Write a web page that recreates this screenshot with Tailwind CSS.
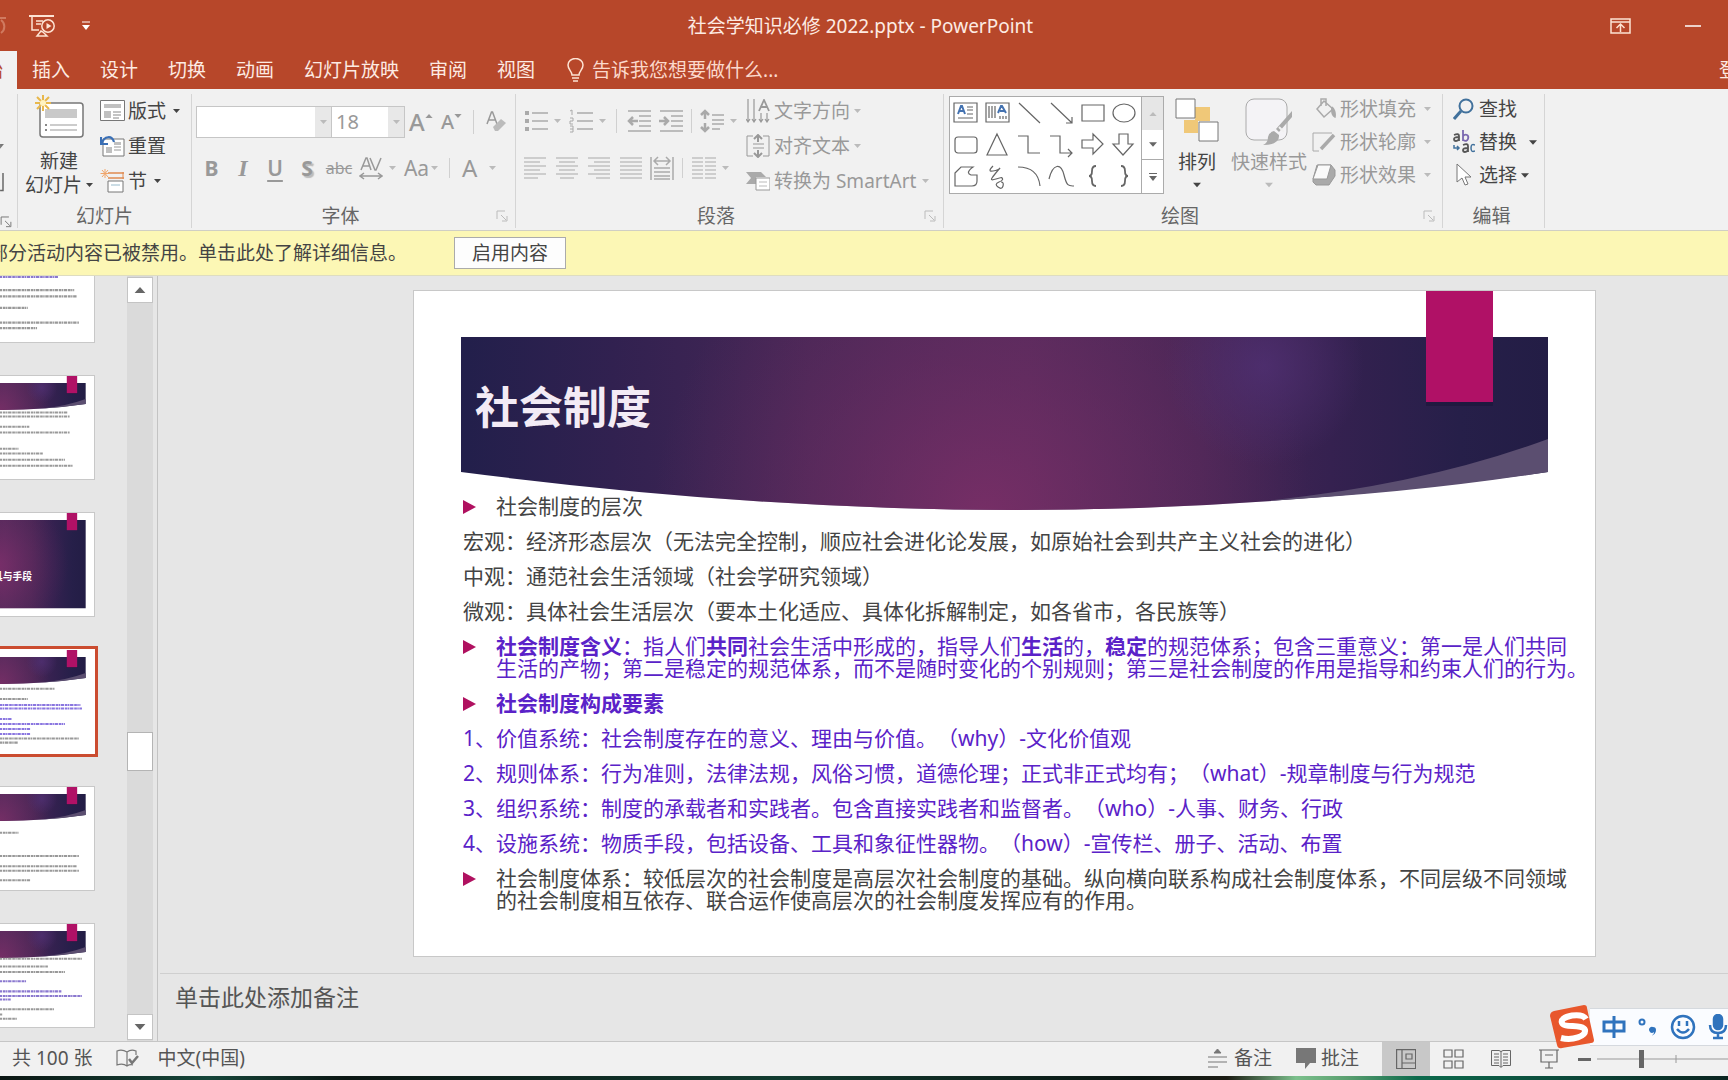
<!DOCTYPE html>
<html lang="zh-CN">
<head>
<meta charset="utf-8">
<title>社会学知识必修 2022.pptx - PowerPoint</title>
<script src="https://cdn.jsdelivr.net/npm/@tailwindcss/browser@4"></script>
</head>
<body class="relative flex h-screen flex-col overflow-hidden bg-[#e6e6e6] font-['Noto_Sans','Noto_Sans_CJK_SC',sans-serif] text-[19px] leading-6 text-[#444] [text-spacing-trim:space-all]">

<svg class="absolute h-0 w-0" aria-hidden="true">
  <defs>
    <linearGradient id="band" x1="0" x2="1" y1="0" y2="0">
      <stop offset="0" stop-color="#221f4b"/><stop offset=".14" stop-color="#312150"/><stop offset=".32" stop-color="#472756"/><stop offset=".52" stop-color="#522a5b"/><stop offset=".68" stop-color="#472655"/><stop offset=".8" stop-color="#352150"/><stop offset=".92" stop-color="#261f49"/><stop offset="1" stop-color="#231d45"/>
    </linearGradient>
    <radialGradient id="glow" gradientUnits="userSpaceOnUse" cx="570" cy="225" r="330"><stop offset="0" stop-color="#7d2f68" stop-opacity=".85"/><stop offset="1" stop-color="#6b2d62" stop-opacity="0"/></radialGradient>
    <radialGradient id="spot" gradientUnits="userSpaceOnUse" cx="850" cy="75" r="100"><stop offset="0" stop-color="#503073" stop-opacity=".8"/><stop offset="1" stop-color="#503073" stop-opacity="0"/></radialGradient>
    <radialGradient id="glowTall" gradientUnits="userSpaceOnUse" cx="540" cy="340" r="480"><stop offset="0" stop-color="#8a3070" stop-opacity=".75"/><stop offset="1" stop-color="#6b2d62" stop-opacity="0"/></radialGradient>
  </defs>
  <symbol id="banner" viewBox="0 0 1181 665">
    <path d="M47 46H1134V181Q860 219 600 219T47 181Z" fill="url(#band)"/>
    <path d="M47 46H1134V181Q860 219 600 219T47 181Z" fill="url(#glow)"/>
    <path d="M47 46H1134V181Q860 219 600 219T47 181Z" fill="url(#spot)"/>
    <path d="M1134 148Q1010 194 850 210Q1000 202 1134 181Z" fill="#5b4e70"/>
    <path d="M1012 111h67v4h-67z" fill="#171336" opacity=".5"/>
    <path d="M1012 0h67v111h-67z" fill="#b01166"/>
  </symbol>
  <symbol id="cover" viewBox="0 0 1181 665">
    <path d="M47 46H1134V615H47Z" fill="url(#band)"/><path d="M47 46H1134V615H47Z" fill="url(#glowTall)"/>
    <path d="M1012 0h67v111h-67z" fill="#b01166"/>
  </symbol>
  <symbol id="down" viewBox="0 0 9 5"><path d="M0 0h9L4.500 5z" fill="currentColor"/></symbol>
  <symbol id="launch" viewBox="0 0 12 12"><path d="M1 9V1h8M5 5l5 5M11 6v5H6" fill="none" stroke="currentColor"/></symbol>
</svg>

<header class="shrink-0 bg-[#b7472a] text-[#fdebe3]">
  <div class="flex h-[51px] items-center">
    <div class="flex flex-1 items-center">
      <svg class="h-6 w-7" viewBox="0 0 28 24" fill="none" stroke="#d07a60" stroke-width="2"><path d="M0 4h6M1 6a8 8 0 0 1 0 13"/></svg>
      <button class="ml-px flex" aria-label="从头开始"><svg class="h-6 w-7" viewBox="0 0 28 24" fill="none" stroke="#fde3d3" stroke-width="1.500"><path d="M0 2h25" stroke-width="2"/><path d="M3 3v13h7M7 7h7M7 10h5M12 17l-4 5h10l-4-4z"/><circle cx="19" cy="12" r="6.200"/><path d="M17.500 9v6l5-3z" fill="#fde3d3" stroke="none"/></svg></button>
      <button class="ml-6 flex" aria-label="自定义快速访问工具栏"><svg class="h-2.5 w-2.5" viewBox="0 0 10 10"><path d="M1 1h8" stroke="#fff"/><path d="M1 4h8L5 9z" fill="#fff"/></svg></button>
    </div>
    <h1 class="pl-5 font-normal">社会学知识必修 2022.pptx - PowerPoint</h1>
    <div class="flex flex-1 items-center justify-end gap-[54px] pr-[27px]">
      <button class="flex" aria-label="功能区显示选项"><svg class="h-4 w-[21px]" viewBox="0 0 21 16" fill="none" stroke="#fde3d3" stroke-width="1.500"><path d="M1 1h19v14H1zM1 4h19M10.500 14V6M6.500 10l4-4 4 4"/></svg></button>
      <button class="flex" aria-label="最小化"><svg class="h-1 w-4" viewBox="0 0 16 4"><path d="M0 2h16" stroke="#fff" stroke-width="1.500"/></svg></button>
    </div>
  </div>
  <nav class="flex h-[38px] items-center overflow-hidden whitespace-nowrap">
    <button class="flex h-full w-[17px] shrink-0 items-center justify-end overflow-hidden bg-[#f1f1f1] text-[#b7472a]" aria-label="开始"><span class="mr-3.5">始</span></button>
    <div class="ml-[15px] flex shrink-0 gap-[30px]">
      <button>插入</button><button>设计</button><button>切换</button><button>动画</button><button>幻灯片放映</button><button>审阅</button><button>视图</button>
    </div>
    <button class="ml-8 flex shrink-0 items-center gap-2 text-[#fbd9cc]"><svg class="h-6 w-[17px]" viewBox="0 0 17 24" fill="none" stroke="#fde3d3" stroke-width="1.500"><path d="M5 17c0-4-4-5-4-10a7.500 6.500 0 0 1 15 0c0 5-4 6-4 10zM5 20h7M6 23h5"/></svg>告诉我您想要做什么...</button>
    <div class="flex flex-1 justify-end overflow-hidden"><a href="#" class="w-[9px] shrink-0 overflow-hidden">登录</a></div>
  </nav>
</header>

<section class="flex h-[142px] shrink-0 overflow-hidden whitespace-nowrap border-b border-[#d0cfc4] bg-[#f1f1f1] pt-[5px] pb-0.5" aria-label="功能区">
  <!-- 剪贴板 -->
  <div class="flex w-[18px] shrink-0 flex-col items-start border-r border-[#d5d5d5] pt-[50px]">
    <svg class="h-[5px] w-1" viewBox="0 0 4 5"><path d="M0 0h4L0 5z" fill="#777"/></svg>
    <svg class="mt-6 h-5 w-1.5" viewBox="0 0 6 20"><path d="M3 0v18H0" fill="none" stroke="#666" stroke-width="1.500"/></svg>
    <svg class="mt-6 h-3 w-3 text-[#777]"><use href="#launch"/></svg>
  </div>

  <!-- 幻灯片 -->
  <div class="flex w-[174px] shrink-0 flex-col border-r border-[#d5d5d5]">
    <div class="flex flex-1 gap-1.5 pl-1.5">
      <button class="flex w-[70px] flex-col items-center">
        <svg class="h-[45px] w-[52px]" viewBox="0 0 52 45"><rect x="7" y="9" width="43" height="34" rx="3" fill="#fff" stroke="#777" stroke-width="1.500"/><path d="M12 15h32v9H12z" fill="#c9c9c9"/><path d="M17 31h27M17 36h27" stroke="#999"/><path d="M12 31h2M12 36h2" stroke="#888" stroke-width="2"/><path d="M10 1v16M2 9h16M4 3l12 12M16 3L4 15" stroke="#e8b84c" stroke-width="2"/><circle cx="10" cy="9" r="3" fill="#fff3c0"/></svg>
        <span class="mt-2.5">新建</span>
        <span class="flex items-center gap-1">幻灯片<svg class="h-1 w-[7px]"><use href="#down"/></svg></span>
      </button>
      <div class="flex flex-col gap-[11px] pt-[5px]">
        <button class="flex items-center gap-[3px]"><svg class="h-[22px] w-[25px]" viewBox="0 0 25 22"><path d="M.5.5h24v20H.5z" fill="#fff" stroke="#777"/><path d="M4 4h17v4H4zM4 11h7v7H4z" fill="#c0c0c0"/><path d="M13 12h8M13 15h8M13 18h6" stroke="#888"/></svg>版式<svg class="ml-1 h-1 w-[7px]"><use href="#down"/></svg></button>
        <button class="flex items-center gap-[3px]"><svg class="h-[22px] w-[25px]" viewBox="0 0 25 22"><path d="M3 4h21v17H3z" fill="#fff" stroke="#777"/><path d="M6 12h6v6H6zM14 7h7v3h-7z" fill="#c0c0c0"/><path d="M14 12h7M14 15h7" stroke="#999"/><path d="M14 7C12 0 4 1 2 8M1 2v7h7" fill="none" stroke="#3a6fb5" stroke-width="2.200"/></svg>重置</button>
        <button class="flex items-center gap-[3px]"><svg class="h-6 w-[25px]" viewBox="0 0 25 24"><path d="M8 4h16M8 9h16" stroke="#e08a50" stroke-width="1.500"/><path d="M23 3v7" stroke="#e08a50"/><path d="M8 12h15v11H8z" fill="#fff" stroke="#777"/><path d="M11 16h9" stroke="#9bc"/><path d="M5 0v9M.5 4.500h9M2 1l6 7M8 1L2 8" stroke="#f0a56a"/></svg>节<svg class="ml-1 h-1 w-[7px]"><use href="#down"/></svg></button>
      </div>
    </div>
    <div class="text-center text-[#666]">幻灯片</div>
  </div>

  <!-- 字体 -->
  <div class="flex w-[324px] shrink-0 flex-col border-r border-[#d5d5d5] text-[#999]">
    <div class="flex-1 pt-3 pl-1">
      <div class="flex h-8 items-center">
        <div class="flex h-8 w-[136px] border border-[#c6c6c6] bg-white"><input class="w-full min-w-0 px-2 outline-none" aria-label="字体"><span class="flex w-4 shrink-0 items-center justify-center bg-[#e8e8e8]"><svg class="h-1 w-[7px] text-[#bbb]"><use href="#down"/></svg></span></div>
        <div class="flex h-8 w-[73px] border border-l-0 border-[#c6c6c6] bg-white"><input class="w-full min-w-0 pl-1 text-[20px] outline-none" value="18" aria-label="字号"><span class="flex w-4 shrink-0 items-center justify-center bg-[#e8e8e8]"><svg class="h-1 w-[7px] text-[#bbb]"><use href="#down"/></svg></span></div>
        <button class="ml-1 flex w-8 items-end text-[24px] font-medium" aria-label="增大字号">A<svg class="mb-4 h-1 w-2 rotate-180"><use href="#down"/></svg></button>
        <button class="flex w-8 items-end text-[20px] font-medium" aria-label="减小字号">A<svg class="mb-4 h-1 w-2"><use href="#down"/></svg></button>
        <span class="h-6 w-px bg-[#d0d0d0]"></span>
        <button class="ml-3 flex" aria-label="清除格式"><svg class="h-[22px] w-5" viewBox="0 0 20 22"><path d="M1 13L5.500 1h1L11 13M3 9h6" fill="none" stroke="#999" stroke-width="1.500"/><path d="M7 16l8-8 5 4-8 8H9z" fill="#bbb"/></svg></button>
      </div>
      <div class="mt-4 flex h-7 items-center text-center">
        <button class="w-[31px] text-[21px] font-bold">B</button>
        <button class="w-8 font-['Liberation_Serif',serif] text-[24px] font-bold italic">I</button>
        <button class="w-8 text-[21px] font-semibold underline underline-offset-4">U</button>
        <button class="w-8 text-[21px] font-bold text-shadow-[2px_2px_1px_#bbb]">S</button>
        <button class="w-8 text-[16px] line-through">abc</button>
        <button class="flex w-11 items-center justify-center gap-1.5" aria-label="字符间距"><svg class="h-6 w-6" viewBox="0 0 24 24" fill="none" stroke="#999" stroke-width="1.500"><path d="M2 14L7 2h1l4 12M4 10h7M11 2l5 12h1l5-12M1 20h22M5 17l-4 3 4 3M19 17l4 3-4 3"/></svg><svg class="h-1 w-[7px] text-[#bbb]"><use href="#down"/></svg></button>
        <button class="flex w-11 items-center justify-center gap-0.5 text-[21px]">Aa<svg class="h-1 w-[7px] text-[#bbb]"><use href="#down"/></svg></button>
        <span class="ml-1.5 h-5 w-px bg-[#d0d0d0]"></span>
        <button class="ml-3 flex items-center gap-3 text-[24px]" aria-label="字体颜色">A<svg class="h-1 w-[7px] text-[#bbb]"><use href="#down"/></svg></button>
      </div>
    </div>
    <div class="flex items-center text-[#666]"><span class="-mr-[18px] flex-1 pr-10 pl-[15px] text-center">字体</span><button class="mr-[7px] flex text-[#bbb]" aria-label="字体设置"><svg class="h-3 w-3"><use href="#launch"/></svg></button></div>
  </div>

  <!-- 段落 -->
  <div class="flex w-[428px] shrink-0 flex-col border-r border-[#d5d5d5] text-[#999]">
    <div class="flex flex-1 pl-2">
      <div class="w-[222px] pt-[15px]">
        <div class="flex h-6 items-center">
          <button class="flex items-center gap-1.5" aria-label="项目符号"><svg class="h-6 w-6" viewBox="0 0 24 24" stroke="#aaa"><path d="M8 4h16M8 12h16M8 20h16" stroke-width="1.500"/><path d="M1 4h4M1 12h4M1 20h4" stroke-width="4"/></svg><svg class="h-1 w-[7px] text-[#bbb]"><use href="#down"/></svg></button>
          <button class="ml-2 flex items-center gap-1.5" aria-label="编号"><svg class="h-6 w-6" viewBox="0 0 24 24" fill="none" stroke="#aaa"><path d="M8 4h16M8 12h16M8 20h16" stroke-width="1.500"/><path d="M1 2l2-1v5M1 9h3v3H1v3h3M1 17h3v6H1M1 20h3"/></svg><svg class="h-1 w-[7px] text-[#bbb]"><use href="#down"/></svg></button>
          <span class="ml-2.5 h-6 w-px bg-[#d0d0d0]"></span>
          <button class="ml-2.5 flex" aria-label="降低列表级别"><svg class="h-6 w-6" viewBox="0 0 24 24" fill="none" stroke="#aaa" stroke-width="1.500"><path d="M1 2h23M12 7h12M12 12h12M12 17h12M1 22h23"/><path d="M11 12H2M6 8l-4 4 4 4" stroke-width="2.500"/></svg></button>
          <button class="ml-2 flex" aria-label="提高列表级别"><svg class="h-6 w-6" viewBox="0 0 24 24" fill="none" stroke="#aaa" stroke-width="1.500"><path d="M1 2h23M12 7h12M12 12h12M12 17h12M1 22h23"/><path d="M0 12h9M5 8l4 4-4 4" stroke-width="2.500"/></svg></button>
          <span class="ml-2 h-6 w-px bg-[#d0d0d0]"></span>
          <button class="ml-2 flex items-center gap-1.5" aria-label="行距"><svg class="h-6 w-6" viewBox="0 0 24 24" fill="none" stroke="#aaa" stroke-width="1.500"><path d="M12 6h12M12 11h12M12 15h12M12 20h8"/><path d="M5 2v8M1 6l4-4 4 4M5 14v8M1 18l4 4 4-4" stroke-width="2.500"/></svg><svg class="h-1 w-[7px] text-[#bbb]"><use href="#down"/></svg></button>
        </div>
        <div class="mt-[23px] flex h-6 items-center gap-2.5">
          <button class="flex" aria-label="左对齐"><svg class="h-[22px] w-[22px]" viewBox="0 0 22 22" stroke="#aaa"><path d="M0 1h22M0 5h16M0 9h22M0 13h16M0 17h22M0 21h14" stroke-width="1.200"/></svg></button>
          <button class="flex" aria-label="居中"><svg class="h-[22px] w-[22px]" viewBox="0 0 22 22" stroke="#aaa"><path d="M0 1h22M3 5h16M0 9h22M3 13h16M0 17h22M4 21h14" stroke-width="1.200"/></svg></button>
          <button class="flex" aria-label="右对齐"><svg class="h-[22px] w-[22px]" viewBox="0 0 22 22" stroke="#aaa"><path d="M0 1h22M6 5h16M0 9h22M6 13h16M0 17h22M8 21h14" stroke-width="1.200"/></svg></button>
          <button class="flex" aria-label="两端对齐"><svg class="h-[22px] w-[22px]" viewBox="0 0 22 22" stroke="#aaa"><path d="M0 1h22M0 5h22M0 9h22M0 13h22M0 17h22M0 21h22" stroke-width="1.200"/></svg></button>
          <button class="-ml-0.5 flex" aria-label="分散对齐"><svg class="h-6 w-6" viewBox="0 0 24 24" fill="none" stroke="#aaa" stroke-width="1.500"><path d="M1 1v23M23 1v23M4 12h16M4 16h16M4 20h16M4 23h16M4 5h16M8 1L4 5l4 4M16 1l4 4-4 4"/></svg></button>
          <span class="-ml-0.5 h-5 w-px bg-[#d0d0d0]"></span>
          <button class="-ml-px flex items-center gap-1.5" aria-label="分栏"><svg class="h-[22px] w-6" viewBox="0 0 24 22" stroke="#aaa"><path d="M0 1h11M0 5h11M0 9h11M0 13h11M0 17h11M0 21h11M13 1h11M13 5h11M13 9h11M13 13h11M13 17h11M13 21h11" stroke-width="1.200"/></svg><svg class="h-1 w-[7px] text-[#bbb]"><use href="#down"/></svg></button>
        </div>
      </div>
      <div class="flex flex-col gap-[11px] pt-[5px]">
        <button class="flex items-center gap-1"><svg class="h-6 w-6" viewBox="0 0 24 24" fill="none" stroke="#999" stroke-width="1.200"><path d="M2 0v23M8 0v23M0 20l2 3 2-3M6 20l2 3 2-3M15 14v9M21 14v9M13 20l2 3 2-3M19 20l2 3 2-3"/><path d="M13 12l5-11 5 11M15 8h6" stroke-width="1.800"/></svg>文字方向<svg class="h-1 w-[7px] text-[#bbb]"><use href="#down"/></svg></button>
        <button class="flex items-center gap-1"><svg class="h-6 w-6" viewBox="0 0 24 24" fill="none" stroke="#999"><path d="M7 2H1v20h6M17 2h6v20h-6M7 10h11M7 14h11"/><path d="M12 1v7M8 5l4-4 4 4M12 16v7M8 19l4 4 4-4" stroke-width="2"/></svg>对齐文本<svg class="h-1 w-[7px] text-[#bbb]"><use href="#down"/></svg></button>
        <button class="flex items-center gap-1"><svg class="h-6 w-6" viewBox="0 0 24 24"><path d="M0 3h15l5 5H10v7H0l5-6z" fill="#aaa"/><path d="M10 9h14v12H10z" fill="#fff" stroke="#999"/><path d="M13 13h8M13 17h8" stroke="#bbb"/></svg>转换为 SmartArt<svg class="ml-0.5 h-1 w-[7px] text-[#bbb]"><use href="#down"/></svg></button>
      </div>
    </div>
    <div class="flex items-center text-[#666]"><span class="-mr-[18px] flex-1 pr-[51px] pl-[25px] text-center">段落</span><button class="mr-[7px] flex text-[#bbb]" aria-label="段落设置"><svg class="h-3 w-3"><use href="#launch"/></svg></button></div>
  </div>

  <!-- 绘图 -->
  <div class="flex w-[499px] shrink-0 flex-col border-r border-[#d5d5d5] text-[#999]">
    <div class="flex flex-1 pt-0.5 pl-[5px]">
      <div class="flex h-[98px] w-[215px] border border-[#ababab] bg-white">
        <svg class="h-24 w-[191px]" viewBox="0 0 191 96" fill="none" stroke="#666" stroke-width="1.200" role="img" aria-label="形状">
          <path d="M4 6h23v19H4zM8 21h15M17 10h6M17 13h6M17 17h6M36 6h23v19H36zM39 9v12M42 9v12M45 9v12M50 19v3M53 19v3M56 19v3"/><path d="M8 17l3-8h1l3 8M9 14h5M48 16l3-7h1l4 7M50 14h4" stroke="#4472b0" stroke-width="2"/>
          <path d="M69 6l21 20M101 6l21 20M122 20v6h-6M132 8h22v16h-22z"/><ellipse cx="174" cy="16" rx="11" ry="9"/>
          <rect x="5" y="40" width="22" height="16" rx="3"/><path d="M47 37l10 21H37zM68 39h10v17h12M100 39h10v17h12M118 52l4 4-4 4M132 43h11v-6l10 10-10 10v-6h-11zM169 37h9v10h5l-10 11-10-11h6z"/>
          <path d="M5 76l6-6h12q-8 6-2 8h6v6q0 5-5 5H5zM43 69q-6 6 0 5t7-3q-6 7-8 10t4 1 6-1q2 2-3 4t-1 5 5-1-2-4M68 70q20 0 22 19M99 82c4-16 12-16 15-4s5 11 10 11"/>
          <path d="M146 69q-4 0-4 5t-3 5q3 0 3 5t4 5M171 69q4 0 4 5t3 5q-3 0-3 5t-4 5" stroke-width="1.800"/>
        </svg>
        <div class="flex flex-1 flex-col border-l border-[#ababab] text-[#666]">
          <button class="flex h-[33px] items-center justify-center bg-[#e6e6e6] text-[#bbb]" aria-label="上一行"><svg class="h-1 w-2 rotate-180"><use href="#down"/></svg></button>
          <button class="flex h-[30px] items-center justify-center border-b border-[#ababab]" aria-label="下一行"><svg class="h-[5px] w-2"><use href="#down"/></svg></button>
          <button class="flex flex-1 items-center justify-center" aria-label="其他"><svg class="h-2 w-2" viewBox="0 0 8 8"><path d="M0 .5h8" stroke="#666"/><path d="M0 3h8L4 8z" fill="#666"/></svg></button>
        </div>
      </div>
      <button class="ml-[11px] flex w-11 flex-col items-center pt-0.5 text-[#444]">
        <svg class="h-11 w-11" viewBox="0 0 44 44"><path d="M20 9h15v14H20zM9 22h14v13H9z" fill="#f0c878"/><path d="M1 1h19v19H1zM24 24h19v19H24z" fill="#fff" stroke="#777"/></svg>
        <span class="mt-2">排列</span><svg class="mt-2 h-1.5 w-2"><use href="#down"/></svg>
      </button>
      <button class="ml-3 flex w-[76px] flex-col items-center pt-0.5">
        <svg class="h-12 w-12" viewBox="0 0 48 48"><rect x="1" y="1" width="41" height="41" rx="8" fill="#f4f3f6" stroke="#aaa"/><path d="M47 13v6L34 34l-3-3zM29 33l5 4q1 10-16 10 5-2 5-8 1-5 6-6z" fill="#aaa"/><path d="M34 29l5 5" stroke="#f1f1f1" stroke-width="2"/></svg>
        <span class="mt-1">快速样式</span><svg class="mt-2 h-1.5 w-2 text-[#bbb]"><use href="#down"/></svg>
      </button>
      <div class="ml-[5px] flex flex-col gap-[9px] pt-px">
        <button class="flex items-center gap-1"><svg class="h-6 w-6" viewBox="0 0 24 24" fill="none" stroke="#aaa" stroke-width="1.500"><path d="M12 4l9 8-9 8-7-8zM9 9V2h5v7"/><path d="M20 10q4 4 3 10-4-2-3-10" fill="#aaa"/></svg>形状填充<svg class="ml-1 h-1 w-[7px] text-[#bbb]"><use href="#down"/></svg></button>
        <button class="flex items-center gap-1"><svg class="h-6 w-6" viewBox="0 0 24 24" fill="none" stroke="#aaa"><path d="M20 3H1v18h6"/><path d="M9 19L22 5" stroke-width="3.500"/></svg>形状轮廓<svg class="ml-1 h-1 w-[7px] text-[#bbb]"><use href="#down"/></svg></button>
        <button class="flex items-center gap-1"><svg class="h-6 w-6" viewBox="0 0 24 24" stroke="#999" stroke-linejoin="round"><path d="M5 2h14l4 5v6l-6 9H4l-3-3v-3z" fill="#aaa"/><path d="M6 2h13l-4 14H1z" fill="#fafafa"/></svg>形状效果<svg class="ml-1 h-1 w-[7px] text-[#bbb]"><use href="#down"/></svg></button>
      </div>
    </div>
    <div class="flex items-center text-[#666]"><span class="-mr-5 flex-1 pr-[27px] text-center">绘图</span><button class="mr-[7px] flex text-[#bbb]" aria-label="形状格式"><svg class="h-3 w-3"><use href="#launch"/></svg></button></div>
  </div>

  <!-- 编辑 -->
  <div class="flex w-[102px] shrink-0 flex-col border-r border-[#d5d5d5]">
    <div class="flex flex-1 flex-col gap-[9px] pt-[3px] pl-2.5">
      <button class="flex items-center gap-1"><svg class="h-[22px] w-[22px]" viewBox="0 0 22 22" fill="none" stroke="#41719c" stroke-width="2"><circle cx="13" cy="8" r="6.500"/><path d="M8 13l-7 8" stroke-width="3"/></svg>查找</button>
      <button class="flex h-6 items-center gap-1"><svg class="h-6 w-[22px]" viewBox="0 0 22 24" fill="none" stroke-width="1.800" aria-hidden="true"><g stroke="#555"><path d="M1 5q5-2 5 1v5M6 7q-5 0-5 2t2 2 3-2M10 15q5-2 5 1v6M15 18q-5 0-5 2t2 2 3-2"/></g><path d="M10 0v11M10 6q2-2 4-1t1 4-5 1" stroke="#7a68b0"/><path d="M22 15q-4-2-4 3t4 3M1 15v3h5M4 16l2 2-2 2" stroke="#41719c" stroke-width="1.500"/></svg>替换<svg class="ml-2 h-[5px] w-2"><use href="#down"/></svg></button>
      <button class="flex items-center gap-1"><svg class="h-6 w-[22px]" viewBox="0 0 22 24"><path d="M4 1v18l5-4 3 7 3-1-3-7h6z" fill="#fff" stroke="#777"/></svg>选择<svg class="h-[5px] w-2"><use href="#down"/></svg></button>
    </div>
    <div class="pr-1 text-center text-[#666]">编辑</div>
  </div>
</section>

<div class="flex h-[45px] shrink-0 items-center overflow-hidden whitespace-nowrap border-b border-[#deddc0] bg-[#fcf7b5]" role="alert">
  <div class="flex w-[407px] justify-end"><span>部分活动内容已被禁用。单击此处了解详细信息。</span></div>
  <button class="ml-[47px] h-8 w-28 border border-[#ababab] bg-[#fdfdfd]">启用内容</button>
</div>

<main class="flex min-h-0 flex-1">
  <aside class="flex w-[158px] shrink-0 justify-between overflow-hidden border-r border-[#c3c3c3]" aria-label="幻灯片缩略图">
    <div class="flex w-[95px] flex-col items-end justify-end gap-8 pb-[13px]">
      <svg class="h-[105px] w-[187px] shrink-0 border border-[#c8c8c8] bg-white" viewBox="0 0 1181 665"><g stroke="#999" stroke-width="15" stroke-dasharray="17 3 9 4 22 5"><path d="M60 245H960" stroke="#8a78cf"/><path d="M60 330H1060M60 370H1080M60 445H760M60 540H1090M60 575H820"/></g></svg>
      <svg class="h-[105px] w-[187px] shrink-0 border border-[#c8c8c8] bg-white" viewBox="0 0 1181 665"><use href="#banner"/><g stroke="#999" stroke-width="13" stroke-dasharray="17 3 9 4 22 5"><path d="M60 235H1020M60 262H1030M60 327H770M60 365H1030M60 470H700M60 500H860M60 540H1000M60 580H1050"/></g></svg>
      <svg class="h-[105px] w-[187px] shrink-0 border border-[#c8c8c8] bg-white" viewBox="0 0 1181 665"><use href="#cover"/><text x="788" y="432" text-anchor="end" fill="#fff" font-size="63" font-weight="700">工具与手段</text></svg>
      <svg class="h-[105px] w-[187px] shrink-0 border border-white bg-white outline-3 outline-offset-0 outline-[#cb4c30]" viewBox="0 0 1181 665"><use href="#banner"/><g stroke-width="13" stroke-dasharray="17 3 9 4 22 5"><path d="M60 250H936M60 316H760M100 572H1090M100 598H700" stroke="#999"/><g stroke="#8a76e0"><path d="M100 355H1100M100 378H1110M60 445H660M60 478H1000M60 510H780M60 543H780"/></g></g></svg>
      <svg class="h-[105px] w-[187px] shrink-0 border border-[#c8c8c8] bg-white" viewBox="0 0 1181 665"><use href="#banner"/><g stroke="#999" stroke-width="13" stroke-dasharray="17 3 9 4 22 5"><path d="M60 295H700M60 445H1090M60 512H1080M60 540H1090M60 602H780"/></g></svg>
      <svg class="h-[105px] w-[187px] shrink-0 border border-[#c8c8c8] bg-white" viewBox="0 0 1181 665"><use href="#banner"/><g stroke="#999" stroke-width="13" stroke-dasharray="17 3 9 4 22 5"><path d="M60 225H1110M60 275H890M60 310H1000M60 550H930M60 585H600M60 612H690"/><path d="M60 370H750M60 435H980M60 465H1110M60 487H650" stroke="#8a78cf"/></g></svg>
    </div>
    <div class="mr-1 flex w-[26px] flex-col bg-[#dadada] pt-px pb-px text-[#666]" role="scrollbar" aria-label="滚动" aria-valuenow="62" aria-controls="slide">
      <button class="flex h-[26px] items-center justify-center border border-[#c4c4c4] bg-white" aria-label="向上"><svg class="h-1.5 w-3 rotate-180"><use href="#down"/></svg></button>
      <div class="flex-[430]"></div>
      <div class="h-[39px] border border-[#b4b4b4] bg-white"></div>
      <div class="flex-[243]"></div>
      <button class="flex h-[26px] items-center justify-center border border-[#c4c4c4] bg-white" aria-label="向下"><svg class="h-1.5 w-3"><use href="#down"/></svg></button>
    </div>
  </aside>

  <div class="flex min-w-0 flex-1 flex-col">
    <div class="flex min-h-0 flex-1 items-start justify-center overflow-hidden pt-3.5 pl-[123px]">
      <article id="slide" class="relative aspect-[1183/667] w-full max-w-[1183px] shrink-0 whitespace-nowrap border border-[#c8c8c8] bg-white">
        <svg class="absolute inset-0 h-full w-full" aria-hidden="true"><use href="#banner"/></svg>
        <div class="relative pt-[92px] pl-[49px]">
          <h2 class="pl-3 text-[44px] leading-12 font-bold text-[#f3ebf5]">社会制度</h2>
          <div class="flex flex-col gap-[13px] pt-16 text-[21px] leading-[22px] text-[#444]">
            <p class="flex"><svg class="mt-1 mr-5 h-4 w-[13px]" viewBox="0 0 13 16"><path d="M0 1v14l13-7z" fill="#b01160"/></svg>社会制度的层次</p>
            <p>宏观：经济形态层次（无法完全控制，顺应社会进化论发展，如原始社会到共产主义社会的进化）</p>
            <p>中观：通范社会生活领域（社会学研究领域）</p>
            <p>微观：具体社会生活层次（要本土化适应、具体化拆解制定，如各省市，各民族等）</p>
            <p class="flex text-[#5a22c8]"><svg class="mt-1 mr-5 h-4 w-[13px]" viewBox="0 0 13 16"><path d="M0 1v14l13-7z" fill="#b01160"/></svg><span><b>社会制度含义</b>：指人们<b>共同</b>社会生活中形成的，指导人们<b>生活</b>的，<b>稳定</b>的规范体系；包含三重意义：第一是人们共同<br>生活的产物；第二是稳定的规范体系，而不是随时变化的个别规则；第三是社会制度的作用是指导和约束人们的行为。</span></p>
            <p class="flex font-bold text-[#5a22c8]"><svg class="mt-1 mr-5 h-4 w-[13px]" viewBox="0 0 13 16"><path d="M0 1v14l13-7z" fill="#b01160"/></svg>社会制度构成要素</p>
            <p class="text-[#5a22c8]">1、价值系统：社会制度存在的意义、理由与价值。（why）-文化价值观</p>
            <p class="text-[#5a22c8]">2、规则体系：行为准则，法律法规，风俗习惯，道德伦理；正式非正式均有；（what）-规章制度与行为规范</p>
            <p class="text-[#5a22c8]">3、组织系统：制度的承载者和实践者。包含直接实践者和监督者。（who）-人事、财务、行政</p>
            <p class="text-[#5a22c8]">4、设施系统：物质手段，包括设备、工具和象征性器物。（how）-宣传栏、册子、活动、布置</p>
            <p class="flex"><svg class="mt-1 mr-5 h-4 w-[13px]" viewBox="0 0 13 16"><path d="M0 1v14l13-7z" fill="#b01160"/></svg><span>社会制度体系：较低层次的社会制度是高层次社会制度的基础。纵向横向联系构成社会制度体系，不同层级不同领域<br>的社会制度相互依存、联合运作使高层次的社会制度发挥应有的作用。</span></p>
          </div>
        </div>
      </article>
    </div>
    <div class="ml-0.5 h-[68px] shrink-0 border-t border-[#cfcfcf] px-[15px] pt-[9px] text-[23px] leading-7 text-[#555]">单击此处添加备注</div>
  </div>
</main>

<footer class="relative flex h-[35px] shrink-0 items-center whitespace-nowrap border-t border-[#c6c6c6] bg-[#f1f1f1] pb-0.5 text-[#555]">
  <span class="ml-3">共 100 张</span>
  <button class="ml-6 flex" aria-label="拼写检查"><svg class="h-[18px] w-[23px]" viewBox="0 0 23 18" fill="none" stroke="#777" stroke-width="1.200"><path d="M11 3Q6 0 1 2v14q6-2 10 1 3-2 6-1M11 3v14M11 3q4-3 9-1v4"/><path d="M13 10l3 4 6-7" stroke-width="2.500"/></svg></button>
  <button class="ml-[18px]">中文(中国)</button>
  <div class="-mb-0.5 flex h-[34px] flex-1 items-center justify-end overflow-hidden">
    <button class="flex items-center gap-[7px] pb-0.5"><svg class="h-5 w-[19px]" viewBox="0 0 19 20" stroke="#777"><path d="M6 5h7L9.500 1z" fill="#777"/><path d="M0 9h19M0 14h19M0 19h10" stroke-width="1.200"/></svg>备注</button>
    <button class="ml-6 flex items-center gap-[5px] pb-0.5"><svg class="h-[21px] w-5" viewBox="0 0 20 21"><path d="M0 0h20v15h-6l-5 6v-6H0z" fill="#777"/></svg>批注</button>
    <button class="ml-[23px] flex h-full w-12 items-center justify-center bg-[#c8c8c8]" aria-label="普通视图"><svg class="h-5 w-5" viewBox="0 0 20 20" fill="none" stroke="#666" stroke-width="1.200"><path d="M.6.6h19v19H.6zM6 1v19M6 14h14M10 5h6v5h-6z"/></svg></button>
    <button class="ml-[13px] flex" aria-label="幻灯片浏览"><svg class="h-5 w-[21px]" viewBox="0 0 21 20" fill="none" stroke="#666" stroke-width="1.200"><path d="M1 1h8v7H1zM12 1h8v7h-8zM1 12h8v7H1zM12 12h8v7h-8z"/></svg></button>
    <button class="ml-[27px] flex" aria-label="阅读视图"><svg class="h-5 w-5" viewBox="0 0 20 20" fill="none" stroke="#666"><path d="M.5 1.500H8l2 1 2-1h7.500v15H12l-2 2-2-2H.5zM10 2v16M3 5h5M3 8h5M3 11h5M3 14h5M12 5h5M12 8h5M12 11h5M12 14h5"/></svg></button>
    <button class="ml-7 flex" aria-label="幻灯片放映"><svg class="h-5 w-5" viewBox="0 0 20 20" fill="none" stroke="#666" stroke-width="1.200"><path d="M0 1h20M2 1v12h16V1M6 6h8M10 13v6M6 19h8"/></svg></button>
    <button class="ml-[19px] h-[3px] w-[13px] bg-[#666]" aria-label="缩小"></button>
    <svg class="ml-1.5 h-[18px] w-[131px]" viewBox="0 0 131 18" role="img" aria-label="缩放"><path d="M0 9h131M79 5v8" stroke="#999"/><path d="M42 0h5v18h-5z" fill="#666"/></svg>
  </div>

  <!-- 输入法悬浮条 -->
  <div class="absolute right-0 bottom-[27px] flex h-11 items-center">
    <svg class="z-10 h-11 w-11" viewBox="0 0 44 44"><path d="M4 6L34 0q3 0 3 3l7 32q0 3-3 3L12 43q-4 1-5-3L0 11q0-4 4-5z" fill="#e8572c"/><path d="M36 14Q33 9 22 10.500 10 13 12 18c1.500 5 21 1 23 7 1 6-12 11-24 8" fill="none" stroke="#fff" stroke-width="6"/></svg>
    <div class="-ml-1 flex h-[38px] w-[138px] items-center overflow-hidden border-y border-[#d5d9de] bg-[#fafcff] pl-3">
      <svg class="h-6 w-6 shrink-0" viewBox="0 0 24 24" fill="none" stroke="#2f73bd" stroke-width="3"><path d="M2 7h20v9H2zM12 1v22"/></svg>
      <svg class="ml-3 h-6 w-5 shrink-0" viewBox="0 0 20 24" fill="none" stroke="#2f73bd" stroke-width="2"><circle cx="4" cy="7" r="2.500"/><path d="M15 12a3 3 0 1 0 1 5q0 3-4 4 6-1 6-6a3 3 0 0 0-3-3z" fill="#2f73bd" stroke="none"/></svg>
      <svg class="ml-3 h-[26px] w-[26px] shrink-0" viewBox="0 0 26 26" fill="none" stroke="#2f73bd" stroke-width="2.500"><circle cx="13" cy="13" r="11"/><path d="M9 7v5M17 7v5M7 15q6 7 12 0"/></svg>
      <svg class="ml-3 h-[26px] w-5 shrink-0" viewBox="0 0 20 26" fill="none" stroke="#2f73bd" stroke-width="2.500"><rect x="6" y="1" width="8" height="14" rx="4" fill="#2f73bd"/><path d="M2 11q0 8 8 8t8-8M10 19v5M5 24h10"/></svg>
    </div>
  </div>
</footer>
<div class="h-1 shrink-0 bg-[linear-gradient(90deg,#0b1613,#16463a_12%,#0b1613_20%,#123c30_45%,#0b1613_66%,#1c1c14_71%,#7cc08c_75%,#5a9f70_78%,#0c6a4c_82%,#0c4c3c_90%,#0b2420)]"></div>
</body>
</html>
